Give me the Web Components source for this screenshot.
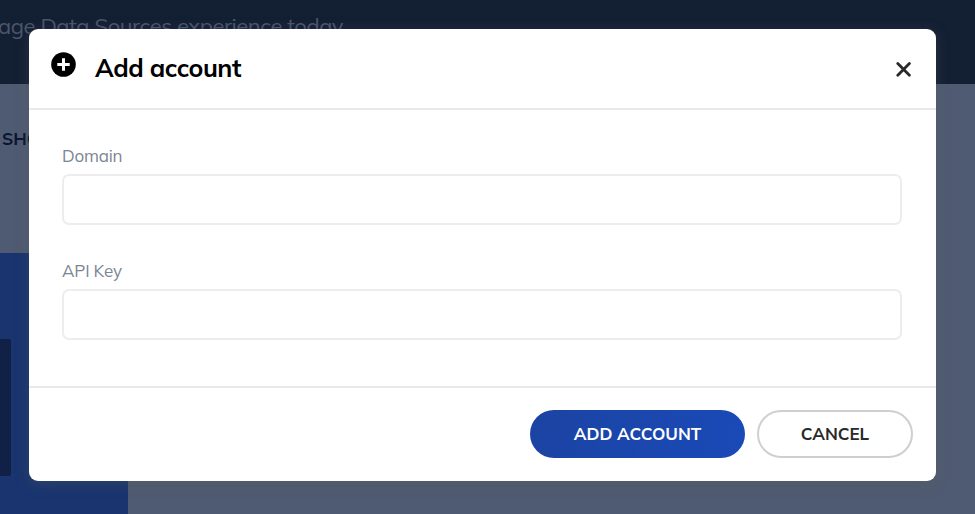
<!DOCTYPE html>
<html lang="en">
<head>
<meta charset="utf-8">
<title>Add account</title>
<style>
  html, body {
    height: 100%;
    margin: 0;
    overflow: hidden;
  }
  body {
    font-family: Muli, Mulish, Lato, sans-serif;
    background-color: #4f5b72;
  }
</style>
</head>
<body>
<sources-page>
  <span slot="tagline">age Data Sources experience today.</span>
  <span slot="tab">SHO</span>
</sources-page>
<modal-dialog>
  <span slot="title">Add account</span>
  <form-field label="Domain"></form-field>
  <form-field label="API Key"></form-field>
  <pill-button slot="actions" variant="primary">ADD ACCOUNT</pill-button>
  <pill-button slot="actions">CANCEL</pill-button>
</modal-dialog>

<script>
class SourcesPage extends HTMLElement {
  constructor() {
    super();
    this.attachShadow({mode: 'open'});
  }

  connectedCallback() {
    this.shadowRoot.innerHTML = `
    <style>
    :host {
      display: flex;
      flex-direction: column;
      height: 100vh;
      overflow: hidden;
    }
    .hero {
      flex: none;
      height: 84px;
      box-sizing: border-box;
      padding-top: 12px;
      background-color: #131f33;
      color: #4a566c;
      font-size: 22px;
      line-height: 29px;
      letter-spacing: -0.45px;
      white-space: nowrap;
    }
    .hero ::slotted(span) {
      margin-left: -2px;
    }
    .tabs {
      flex: none;
      display: flex;
      align-items: center;
      box-sizing: border-box;
      height: 169px;
      padding: 0 0 61px 2px;
      color: #0a1531;
      font-size: 17.5px;
      font-weight: 700;
    }
    .card {
      flex: 1;
      width: 128px;
      box-sizing: border-box;
      padding-top: 86px;
      background-color: #19346f;
    }
    .thumb {
      width: 11px;
      height: 137px;
      border-radius: 0 2px 2px 0;
      background-color: #102047;
    }
    </style>

    <div class="hero"><slot name="tagline"></slot></div>
    <div class="tabs"><slot name="tab"></slot></div>
    <div class="card"><div class="thumb"></div></div>
    `;
  }
}

class ModalDialog extends HTMLElement {
  constructor() {
    super();
    this.attachShadow({mode: 'open'});
  }

  connectedCallback() {
    this.shadowRoot.innerHTML = `
    <style>
    :host {
      position: absolute;
      inset: 0;
      display: block;
      box-sizing: border-box;
      padding: 28.5px 39px 33px 29px;
    }
    .dialog {
      display: flex;
      flex-direction: column;
      height: 100%;
      border-radius: 9px;
      background-color: white;
      box-shadow: 0 3px 14px 0 rgba(90, 95, 90, 0.35);
    }
    header {
      flex: none;
      display: flex;
      align-items: center;
      box-sizing: border-box;
      height: 81.5px;
      padding: 0 25px 0 22px;
      border-bottom: 2px solid #e8e9ea;
    }
    .plus {
      width: 25px;
      height: 25px;
      margin: 0 19px 7px 0;
    }
    h2 {
      margin: 0 0 1px;
      color: black;
      font-size: 25px;
      font-weight: 700;
      letter-spacing: -0.45px;
    }
    button {
      display: flex;
      margin: 2px 0 0 auto;
      padding: 0;
      border: 0;
      background: none;
    }
    main {
      flex: 1;
      display: flex;
      flex-direction: column;
      gap: 32px;
      padding: 32px 34px 0 33px;
    }
    footer {
      flex: none;
      display: flex;
      justify-content: flex-end;
      gap: 12px;
      box-sizing: border-box;
      height: 95px;
      padding: 22px 23px 0;
      border-top: 2px solid #e8e9ea;
    }
    </style>

    <div class="dialog">
      <header>
        <svg class="plus" viewBox="0 0 25 25">
          <circle cx="12.5" cy="12.5" r="12.3" fill="black"/>
          <path d="M12.5 6.3v12.4M6.3 12.5h12.4" stroke="white" stroke-width="3" fill="none"/>
        </svg>
        <h2><slot name="title"></slot></h2>
        <button type="button" aria-label="Close">
          <svg width="15" height="15" viewBox="0 0 15 15">
            <path d="M1.8 1.6l11.6 11.6M13.4 1.6L1.8 13.2" stroke="#292929" stroke-width="2.8" stroke-linecap="round"/>
          </svg>
        </button>
      </header>
      <main><slot></slot></main>
      <footer><slot name="actions"></slot></footer>
    </div>
    `;
  }
}

class FormField extends HTMLElement {
  constructor() {
    super();
    this.attachShadow({mode: 'open'});
  }

  connectedCallback() {
    this.shadowRoot.innerHTML = `
    <style>
    :host {
      display: block;
    }
    label {
      display: block;
      color: #7c8692;
      font-size: 17px;
      line-height: 28px;
      letter-spacing: -0.2px;
    }
    input {
      display: block;
      box-sizing: border-box;
      width: 100%;
      height: 51px;
      margin: 4px 0 0;
      padding: 0 14px;
      border: 2px solid #ededee;
      border-radius: 7px;
      outline: 0;
      background-color: white;
      font: inherit;
    }
    </style>

    <label for="field">${this.getAttribute('label')}</label>
    <input id="field" type="text">
    `;
  }
}

class PillButton extends HTMLElement {
  constructor() {
    super();
    this.attachShadow({mode: 'open'});
  }

  connectedCallback() {
    this.shadowRoot.innerHTML = `
    <style>
    :host {
      display: block;
      width: 156px;
    }
    :host([variant="primary"]) {
      width: 215px;
    }
    button {
      width: 100%;
      height: 48px;
      padding: 0 0 2px;
      border: 2px solid #cfcfcf;
      border-radius: 25px;
      background: white;
      color: #292929;
      font: 700 17px Muli, Mulish, Lato, sans-serif;
      cursor: pointer;
    }
    :host([variant="primary"]) button {
      border: 0;
      background: linear-gradient(100deg, #1b43a2, #1a4ab8);
      color: white;
    }
    </style>

    <button type="button"><slot></slot></button>
    `;
  }
}

customElements.define('sources-page', SourcesPage);
customElements.define('form-field', FormField);
customElements.define('pill-button', PillButton);
customElements.define('modal-dialog', ModalDialog);
</script>
</body>
</html>
